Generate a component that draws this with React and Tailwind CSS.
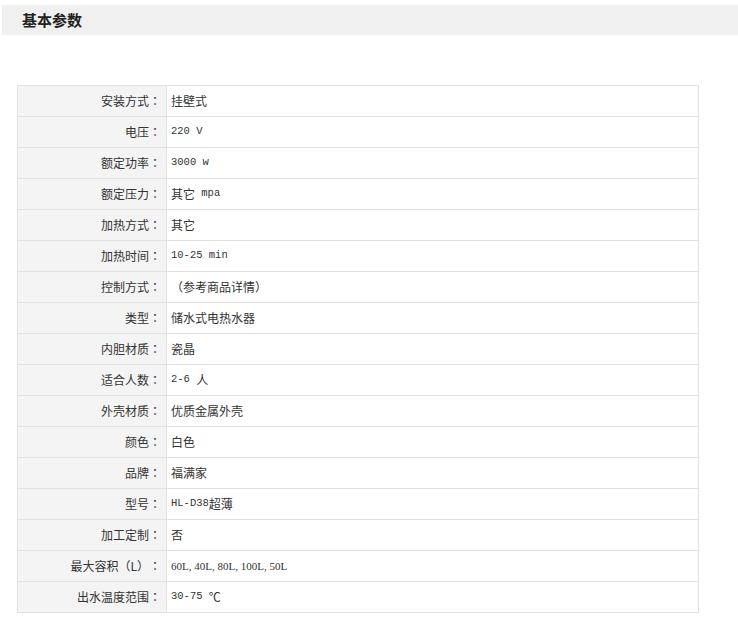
import React from "react";

const rows = [
  ["安装方式", "挂壁式"],
  ["电压", "220 V"],
  ["额定功率", "3000 w"],
  ["额定压力", "其它 mpa"],
  ["加热方式", "其它"],
  ["加热时间", "10-25 min"],
  ["控制方式", "（参考商品详情）"],
  ["类型", "储水式电热水器"],
  ["内胆材质", "瓷晶"],
  ["适合人数", "2-6 人"],
  ["外壳材质", "优质金属外壳"],
  ["颜色", "白色"],
  ["品牌", "福满家"],
  ["型号", "HL-D38超薄"],
  ["加工定制", "否"],
  ["最大容积（L）", "60L, 40L, 80L, 100L, 50L", true],
  ["出水温度范围", "30-75 ℃"],
];

function Mixed({ text, serif }) {
  if (serif) {
    return (
      <span className="font-['Liberation_Serif',serif] text-[11px] whitespace-pre">{text}</span>
    );
  }
  const parts = text.match(/[\u0020-\u007e]+|[^\u0020-\u007e]+/g) || [];
  return parts.map((p, i) =>
    /^[\u0020-\u007e]+$/.test(p) ? (
      <span key={i} className="font-['Liberation_Mono',monospace] text-[10.5px] whitespace-pre">
        {p}
      </span>
    ) : (
      <span key={i}>{p}</span>
    )
  );
}

export default function App() {
  return (
    <div className="w-[738px] h-[622px] bg-white text-[#333] font-['Noto_Sans_CJK_SC',sans-serif] text-[12px] pt-[5px]">
      <div className="ml-[2px] h-[30px] bg-[#f0f0f0] flex items-center pl-[20px]">
        <span className="text-[15px] font-bold text-[#222]">基本参数</span>
      </div>
      <div className="mt-[50px] ml-[17px] w-[682px] border border-[#e2e2e2]">
        {rows.map(([k, v, serif], i) => (
          <div
            key={i}
            className={`flex ${i > 0 ? "h-[31px] border-t border-[#e2e2e2]" : "h-[30px]"}`}
          >
            <div className="w-[149px] shrink-0 bg-[#f4f4f4] border-r border-[#e2e2e2] flex items-center justify-end pr-[5px]">
              <span>{k}</span>
              <span className="font-['Noto_Sans_CJK_TC',sans-serif]">：</span>
            </div>
            <div className="flex-1 flex items-center pl-[4px]">
              <Mixed text={v} serif={serif} />
            </div>
          </div>
        ))}
      </div>
    </div>
  );
}
